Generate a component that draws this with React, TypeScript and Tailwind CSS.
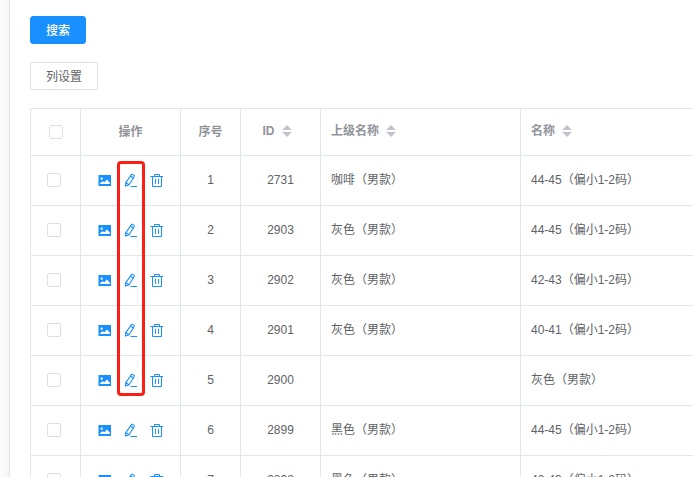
type Row = {
    no: number;
    id: number;
    parent: string;
    name: string;
};

const rows: Row[] = [
    { no: 1, id: 2731, parent: "咖啡（男款）", name: "44-45（偏小1-2码）" },
    { no: 2, id: 2903, parent: "灰色（男款）", name: "44-45（偏小1-2码）" },
    { no: 3, id: 2902, parent: "灰色（男款）", name: "42-43（偏小1-2码）" },
    { no: 4, id: 2901, parent: "灰色（男款）", name: "40-41（偏小1-2码）" },
    { no: 5, id: 2900, parent: "", name: "灰色（男款）" },
    { no: 6, id: 2899, parent: "黑色（男款）", name: "44-45（偏小1-2码）" },
    { no: 7, id: 2898, parent: "黑色（男款）", name: "42-43（偏小1-2码）" },
];

const headCell = "border-r border-b border-[#dfe6ec] px-[10px] align-middle";
const bodyCell = "border-r border-b border-[#dfe6ec] px-[10px] pb-[2px] align-middle";

const PictureIcon = () => (
    <svg viewBox="0 0 14 14" className="w-[14px] h-[14px]" fill="currentColor">
        <path
            fillRule="evenodd"
            d="M.5 2H13V13H.5zM3.700 4.400a1.200 1.200 0 1 0 0 2.400 1.200 1.200 0 0 0 0-2.400zM2 11h9.800V9.600L8.800 6.400 6.500 9.200 4.600 8.200 2 10.200z"
        />
    </svg>
);

const EditIcon = () => (
    <svg
        viewBox="0 0 14 14"
        className="w-[14px] h-[14px]"
        fill="none"
        stroke="currentColor"
        strokeWidth="1.1"
        strokeLinejoin="round"
        strokeLinecap="round"
    >
        <path d="M7.300 1.800 8.200 1.100 10.300 2.400 10.100 3.700 5 11.700 1.500 13.100 1.700 9.900z" />
        <path d="M6.500 3 9.400 5M1.900 9.800 4.900 11.700M7 13.500H12.700" />
    </svg>
);

const DeleteIcon = () => (
    <svg
        viewBox="0 0 14 14"
        className="w-[14px] h-[14px]"
        fill="none"
        stroke="currentColor"
        strokeWidth="1"
        strokeLinecap="round"
        strokeLinejoin="round"
    >
        <path d="M.8 3.500H12.700M4.500 3.300V1.500H9.500V3.300M2.500 3.700V13.500H11.500V3.700M5.500 6.300V10.500M8.500 6.300V10.500" />
    </svg>
);

const SortCaret = () => (
    <svg viewBox="0 0 10 12" className="w-[10px] h-[12px] ml-[7px] mr-[7px]" fill="#c0c4cc">
        <path d="M0 5 5 0 10 5zM0 7H10L5 12z" />
    </svg>
);

const Checkbox = ({ label }: { label: string }) => (
    <input
        type="checkbox"
        aria-label={label}
        className="block w-[14px] h-[14px] appearance-none rounded-xs border border-[#dcdfe6] bg-white checked:bg-[#1890ff]"
    />
);

const SortHeader = ({ title }: { title: string }) => (
    <button className="flex items-center pb-[2px] font-bold">
        {title}
        <SortCaret />
    </button>
);

export default function App() {
    return (
        <div className="flex h-screen overflow-hidden bg-white text-xs text-[#606266] font-['Liberation_Sans','Noto_Sans_CJK_SC',sans-serif]">
            <div className="w-[10px] shrink-0 border-r border-[#e6e6f0] bg-linear-to-r from-[#fcfcfc] to-[#f5f5f5]" />
            <main className="min-w-0 flex-1 overflow-hidden pl-5 pt-4">
                <div>
                    <button className="block h-7 rounded-[3px] border border-[#1890ff] bg-[#1890ff] px-[15px] pt-[2px] font-medium text-white">
                        搜索
                    </button>
                </div>
                <div className="mt-[18px]">
                    <button className="block h-7 rounded-[3px] border border-[#dcdfe6] bg-white px-[15px] pt-[2px]">
                        列设置
                    </button>
                </div>
                <div className="relative mt-[18px]">
                    <table className="w-full min-w-[691px] table-fixed border-separate border-spacing-0 border-t border-l border-[#dfe6ec]">
                        <colgroup>
                            <col className="w-[50px]" />
                            <col className="w-[100px]" />
                            <col className="w-[60px]" />
                            <col className="w-[80px]" />
                            <col className="w-[200px]" />
                            <col />
                        </colgroup>
                        <thead className="text-[#909399]">
                            <tr className="h-[47px]">
                                <th className={`${headCell} pl-[18px]`}>
                                    <Checkbox label="全选" />
                                </th>
                                <th className={headCell}>操作</th>
                                <th className={headCell}>序号</th>
                                <th className={headCell}>
                                    <div className="flex justify-center">
                                        <SortHeader title="ID" />
                                    </div>
                                </th>
                                <th className={headCell}>
                                    <SortHeader title="上级名称" />
                                </th>
                                <th className={headCell}>
                                    <SortHeader title="名称" />
                                </th>
                            </tr>
                        </thead>
                        <tbody>
                            {rows.map((row) => (
                                <tr key={row.no} className="h-[50px]">
                                    <td className={`${bodyCell} pl-4`}>
                                        <Checkbox label={`选择 ${row.id}`} />
                                    </td>
                                    <td className={bodyCell}>
                                        <div className="flex gap-3 pl-[7px] pt-px text-[#1890ff]">
                                            <button aria-label="图片">
                                                <PictureIcon />
                                            </button>
                                            <button aria-label="编辑">
                                                <EditIcon />
                                            </button>
                                            <button aria-label="删除">
                                                <DeleteIcon />
                                            </button>
                                        </div>
                                    </td>
                                    <td className={`${bodyCell} text-center`}>{row.no}</td>
                                    <td className={`${bodyCell} text-center`}>{row.id}</td>
                                    <td className={bodyCell}>{row.parent}</td>
                                    <td className={bodyCell}>{row.name}</td>
                                </tr>
                            ))}
                        </tbody>
                    </table>
                    {/* highlight around the edit column */}
                    <div className="pointer-events-none absolute left-[87px] top-[53px] h-[235px] w-[28px] rounded-[4px] border-3 border-[#fb2015]" />
                </div>
            </main>
        </div>
    );
}
